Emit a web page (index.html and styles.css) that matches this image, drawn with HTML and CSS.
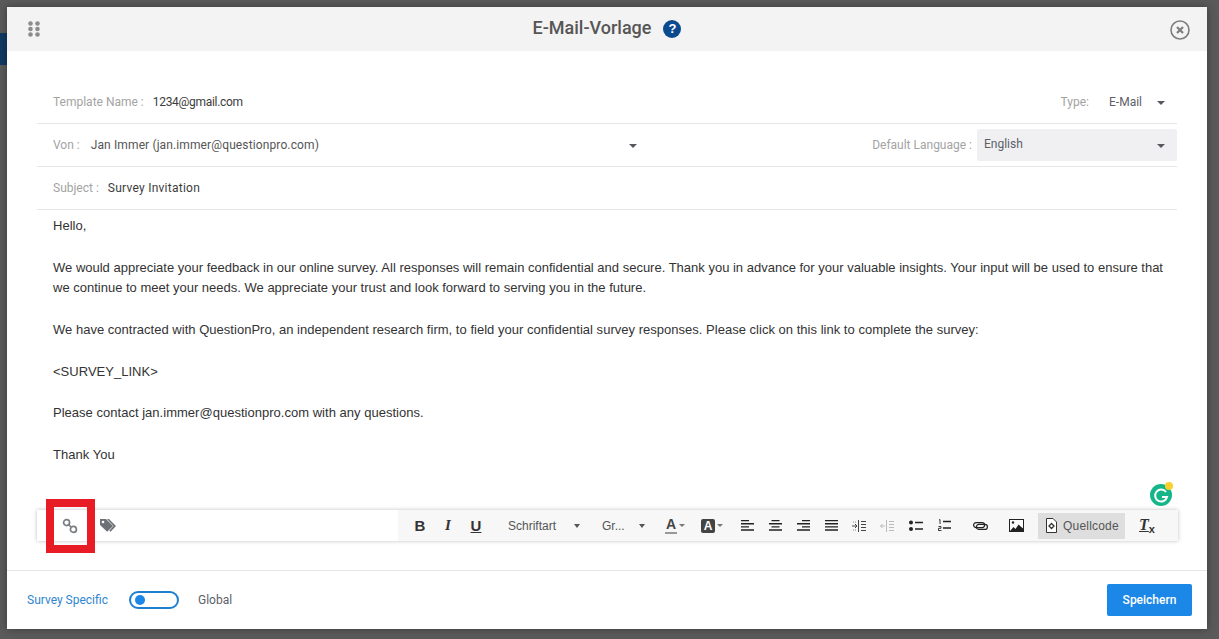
FILE: index.html
```html
<!DOCTYPE html>
<html lang="de">
<head>
<meta charset="utf-8">
<title>E-Mail-Vorlage</title>
<link rel="stylesheet" href="styles.css">
</head>
<body>
<main class="modal">
  <header class="modal-head">
    <svg class="grip" width="12" height="16" viewBox="0 0 12 16"><g fill="#8c8c8c"><circle cx="2.5" cy="2.5" r="2.3"/><circle cx="9.5" cy="2.5" r="2.3"/><circle cx="2.5" cy="8" r="2.3"/><circle cx="9.5" cy="8" r="2.3"/><circle cx="2.5" cy="13.5" r="2.3"/><circle cx="9.5" cy="13.5" r="2.3"/></g></svg>
    <div class="title-group">
      <h1 class="title">E-Mail-Vorlage</h1>
      <span class="help">?</span>
    </div>
    <svg class="close" width="20" height="20" viewBox="0 0 20 20"><circle cx="10" cy="10" r="9" fill="none" stroke="#7d7d7d" stroke-width="1.6"/><path d="M7 7l6 6M13 7l-6 6" stroke="#7d7d7d" stroke-width="2.2" fill="none"/></svg>
  </header>

  <section class="modal-body">
    <div class="row">
      <span class="label">Template Name :</span>
      <span class="value value-template">1234@gmail.com</span>
      <span class="label push-right">Type:</span>
      <span class="value type-value">E-Mail</span>
      <i class="caret caret-type"></i>
    </div>
    <div class="row">
      <span class="label">Von :</span>
      <span class="value value-from">Jan Immer (jan.immer@questionpro.com)</span>
      <i class="caret caret-from"></i>
      <span class="label push-right">Default Language :</span>
      <div class="lang-select"><span class="lang-text">English</span><i class="caret"></i></div>
    </div>
    <div class="row">
      <span class="label">Subject :</span>
      <span class="value value-subject">Survey Invitation</span>
    </div>

    <article class="message">
      <p>Hello,</p>
      <p class="para-natural">We would appreciate your feedback in our online survey. All responses will remain confidential and secure. Thank you in advance for your valuable insights. Your input will be used to ensure that we continue to meet your needs. We appreciate your trust and look forward to serving you in the future.</p>
      <p>We have contracted with QuestionPro, an independent research firm, to field your confidential survey responses. Please click on this link to complete the survey:</p>
      <p>&lt;SURVEY_LINK&gt;</p>
      <p>Please contact jan.immer@questionpro.com with any questions.</p>
      <p>Thank You</p>
    </article>

    <div class="toolbar">
      <div class="tools-left">
        <svg class="tool-chain" width="16" height="16" viewBox="0 0 16 16"><g fill="none" stroke="#7a7e84" stroke-width="1.700"><circle cx="4.600" cy="4.600" r="3"/><circle cx="11.400" cy="11.400" r="3"/><path d="M7 7l2 2"/></g></svg>
        <svg class="tool-tag" width="18" height="15" viewBox="0 0 18 15"><path d="M1 1h6l7 7-5.8 5.8L1 7z" fill="#6d7176"/><path d="M10 1l7 7-5.500 5.800-1.300-1 4.300-4.800L8 1z" fill="#6d7176"/><circle cx="4" cy="4" r="1.300" fill="#fff"/></svg>
      </div>
      <div class="tools-right">
        <span class="btn glyph bold">B</span>
        <span class="btn glyph italic">I</span>
        <span class="btn glyph under">U</span>
        <span class="drop drop-font"><span>Schriftart</span><i class="caret caret-small"></i></span>
        <span class="drop drop-size"><span>Gr...</span><i class="caret caret-small"></i></span>
        <span class="color-btn color-text"><span class="color-a">A</span><i class="caret caret-tiny"></i></span>
        <span class="color-btn color-bg"><span class="color-box">A</span><i class="caret caret-tiny"></i></span>
        <span class="btn"><svg width="13" height="11" viewBox="0 0 13 11"><path d="M0 .5h8M0 3.700h13M0 6.900h8M0 10h13" stroke="#222" stroke-width="1.400"/></svg></span>
        <span class="btn"><svg width="13" height="11" viewBox="0 0 13 11"><path d="M2.500 .5h8M0 3.700h13M2.500 6.900h8M0 10h13" stroke="#222" stroke-width="1.400"/></svg></span>
        <span class="btn"><svg width="13" height="11" viewBox="0 0 13 11"><path d="M5 .5h8M0 3.700h13M5 6.900h8M0 10h13" stroke="#222" stroke-width="1.400"/></svg></span>
        <span class="btn"><svg width="13" height="11" viewBox="0 0 13 11"><path d="M0 .5h13M0 3.700h13M0 6.900h13M0 10h13" stroke="#222" stroke-width="1.400"/></svg></span>
        <span class="btn"><svg width="14" height="12" viewBox="0 0 14 12"><path d="M6.500 0v12M9 1.500h5M9 4.500h5M9 7.500h5M9 10.500h5" stroke="#444" stroke-width="1"/><path d="M0 6h4.500M3 4l2 2-2 2" stroke="#444" fill="none"/><path d="M1 2h3M1 10h3" stroke="#888" stroke-dasharray="1 1"/></svg></span>
        <span class="btn"><svg width="14" height="12" viewBox="0 0 14 12"><path d="M6.500 0v12M9 1.500h5M9 4.500h5M9 7.500h5M9 10.500h5" stroke="#bbb" stroke-width="1"/><path d="M5 6H.5M2.500 4l-2 2 2 2" stroke="#bbb" fill="none"/></svg></span>
        <span class="btn btn-list"><svg width="14" height="12" viewBox="0 0 14 12"><circle cx="2" cy="2.500" r="2" fill="#222"/><circle cx="2" cy="9" r="2" fill="#222"/><path d="M6 2.500h8M6 9h8" stroke="#222" stroke-width="1.400"/></svg></span>
        <span class="btn"><svg width="13" height="13" viewBox="0 0 13 13"><path d="M1 1l1-.5V5M.5 7.500h2.500v1.800H.5v2.200h3" stroke="#222" fill="none" stroke-width=".9"/><path d="M5 2.500h8M5 9h8" stroke="#222" stroke-width="1.400"/></svg></span>
        <span class="btn btn-link"><svg width="15" height="8" viewBox="0 0 15 8"><g fill="none" stroke="#222" stroke-width="1.200"><rect x=".6" y=".6" width="11" height="5" rx="2.500"/><rect x="3.400" y="2.400" width="11" height="5" rx="2.500"/></g></svg></span>
        <span class="btn btn-image"><svg width="15" height="13" viewBox="0 0 15 13"><rect x=".5" y=".5" width="14" height="12" fill="#fff" stroke="#222"/><path d="M1 12l3.500-4 2 2 3-4.500L14 9.500V12z" fill="#222"/><circle cx="4" cy="3.500" r="1.200" fill="#222"/></svg></span>
        <span class="source"><svg width="11" height="15" viewBox="0 0 11 15"><path d="M.5.5h6.500l3.500 3.500v10.500H.5z" fill="#fff" stroke="#333"/><path d="M5.500 5.500L3 8l2.500 2.500L8 8z" fill="none" stroke="#333" stroke-width="1.300"/></svg><span>Quellcode</span></span>
        <span class="btn btn-clear"><span class="clear-t">T</span><span class="clear-x">x</span></span>
      </div>
    </div>
  </section>

  <footer class="modal-foot">
    <span class="scope-on">Survey Specific</span>
    <span class="toggle"><span class="knob"></span></span>
    <span class="scope-off">Global</span>
    <span class="save">Speichern</span>
  </footer>

  <span class="grammarly"><svg width="24" height="24" viewBox="0 0 24 24"><circle cx="11" cy="13" r="11" fill="#15b58a"/><path d="M16 10a6 6 0 1 0 1 5h-5" fill="none" stroke="#fff" stroke-width="2"/><circle cx="19" cy="4" r="4" fill="#fcd02c"/></svg></span>
  <span class="marker"></span>
</main>
</body>
</html>
```
FILE: styles.css
```css
* { box-sizing: border-box; }
html, body { height: 100%; }
body {
  margin: 0;
  height: 639px;
  overflow: hidden;
  padding: 7px 12px 10px 7px;
  background-color: #5a5a5a;
  background-image: linear-gradient(#0f3a63, #0f3a63);
  background-size: 7px 32px;
  background-position: 0 33px;
  background-repeat: no-repeat;
  font-family: Roboto, "Noto Sans", sans-serif;
}
.modal {
  position: relative;
  width: 1200px;
  height: 622px;
  background: #fff;
  display: flex;
  flex-direction: column;
  box-shadow: 0 0 8px rgba(0, 0, 0, .35);
}
.modal-head {
  height: 44px;
  flex: none;
  background: #f3f3f3;
  display: grid;
  grid-template-columns: 1fr auto 1fr;
  align-items: center;
  padding: 0 17px 0 21px;
}
.grip { justify-self: start; margin-top: -1px; }
.close { justify-self: end; margin-top: 1px; }
.title-group { display: flex; align-items: center; gap: 12px; margin: -2px 4px 0 0; }
.title { margin: 0; font-size: 18px; font-weight: 500; color: #565656; line-height: 24px; }
.help {
  width: 18px; height: 18px; border-radius: 50%;
  background: #0c4a8f; color: #fff;
  font: bold 13px/18px "Liberation Sans", sans-serif;
  text-align: center; margin-top: 2px;
}
.modal-body {
  flex: 1;
  min-height: 0;
  padding: 30px 30px 0;
  display: flex;
  flex-direction: column;
}
.row {
  flex: none;
  height: 43px;
  border-bottom: 1px solid #e6e6e6;
  display: flex;
  align-items: center;
  padding-left: 16px;
  font-size: 12px;
}
.label { color: #a3a3a3; }
.value { color: #3c3c3c; }
.value-template { margin-left: 9px; letter-spacing: -.3px; }
.value-subject { margin-left: 9px; letter-spacing: .25px; }
.value-from { margin-left: 11px; width: 538px; color: #555; letter-spacing: .12px; }
.push-right { margin-left: auto; }
.type-value { margin-left: 20px; color: #5b6068; }
.caret {
  display: block;
  width: 0; height: 0;
  border-left: 4px solid transparent;
  border-right: 4px solid transparent;
  border-top: 4px solid #55595e;
}
.caret-type { margin: 1px 12px 0 15px; }
.caret-from { margin-top: 1px; }
.lang-select {
  width: 200px; height: 32px;
  margin-left: 5px;
  background: #f0f0f2;
  border-radius: 2px;
  display: flex;
  align-items: center;
  justify-content: space-between;
  padding: 0 12px 0 7px;
}
.lang-text { color: #5b6068; margin-top: -2px; }
.lang-select .caret { margin-top: 2px; }
.message {
  flex: none;
  height: 300px;
  padding: 6px 14px 0 16px;
  font: 13px/20.8px "Liberation Sans", Arial, sans-serif;
  letter-spacing: .02px;
  color: #333;
}
.message p { margin: 0 0 20.8px; }
.message .para-natural { letter-spacing: normal; }
.toolbar {
  flex: none;
  height: 31px;
  width: 1141px;
  display: flex;
  box-shadow: 0 0 4px rgba(0, 0, 0, .25);
}
.tools-left {
  width: 361px;
  background: #fff;
  display: flex;
  align-items: center;
}
.tool-chain { margin-left: 25px; }
.tool-tag { margin-left: 21px; }
.tools-right {
  flex: 1;
  background: #f7f7f7;
  display: flex;
  align-items: center;
  padding-left: 8px;
}
.btn {
  flex: none;
  width: 28px;
  height: 31px;
  display: flex;
  align-items: center;
  justify-content: center;
}
.glyph { font: bold 15px "Liberation Sans", sans-serif; color: #333; }
.italic { font-style: italic; font-family: "Liberation Serif", serif; }
.under { text-decoration: underline; }
.drop {
  flex: none;
  height: 31px;
  display: flex;
  align-items: center;
  font: 12px "Liberation Sans", sans-serif;
  color: #555;
}
.drop-font { width: 102px; padding-left: 18px; }
.drop-font .caret { margin-left: 18px; }
.drop-size { width: 64px; padding-left: 10px; }
.drop-size .caret { margin-left: 14px; }
.caret-small { border-left-width: 3.500px; border-right-width: 3.500px; border-top-color: #555; }
.caret-tiny { border-left-width: 3px; border-right-width: 3px; border-top-width: 3px; border-top-color: #777; }
.color-btn { flex: none; display: flex; align-items: center; height: 31px; font: bold 14px "Liberation Sans", sans-serif; }
.color-text { width: 35px; margin-left: 9px; }
.color-a { color: #444; border-bottom: 2px solid #999; padding: 0 1px; margin-right: 2px; line-height: 15px; }
.color-bg { width: 32px; margin-left: 1px; }
.color-box { width: 14px; height: 14px; border-radius: 2px; background: #444; color: #fff; font-size: 12px; line-height: 14px; text-align: center; margin-right: 2px; }
.btn-list { margin-left: 1px; }
.btn-link { margin-left: 8px; }
.btn-image { margin-left: 8px; }
.source {
  flex: none;
  width: 87px; height: 26px;
  margin-left: 8px;
  background: #dedede;
  display: flex;
  align-items: center;
  gap: 6px;
  padding-left: 8px;
  font: 12px "Liberation Sans", sans-serif;
  letter-spacing: .2px;
  color: #555;
}
.btn-clear { margin-left: 8px; align-items: baseline; padding-top: 6px; }
.clear-t { font: italic bold 16px "Liberation Serif", serif; text-decoration: underline; color: #333; }
.clear-x { font: bold 11px "Liberation Sans", sans-serif; color: #333; position: relative; top: 3px; }
.modal-foot {
  flex: none;
  height: 59px;
  border-top: 1px solid #e6e6e6;
  display: flex;
  align-items: center;
  padding: 0 15px 0 20px;
  font-size: 12px;
}
.scope-on { color: #2f86d0; }
.toggle {
  width: 50px; height: 18px;
  margin-left: 21px;
  border: 2px solid #1f7fcf;
  border-radius: 9px;
  padding: 2px 0 0 4px;
}
.knob { display: block; width: 10px; height: 10px; border-radius: 50%; background: #1b87e6; }
.scope-off { margin-left: 19px; color: #5d6167; }
.save {
  margin-left: auto;
  width: 85px; height: 32px;
  background: #1b87e6;
  border-radius: 2px;
  color: #fff;
  font-weight: 500;
  text-align: center;
  line-height: 32px;
}
.grammarly { position: absolute; left: 1143px; top: 475px; width: 24px; height: 24px; }
.grammarly svg { display: block; }
.marker {
  position: absolute;
  left: 39px; top: 492px;
  width: 49px; height: 54px;
  border: 8px solid #e81c24;
}
```
